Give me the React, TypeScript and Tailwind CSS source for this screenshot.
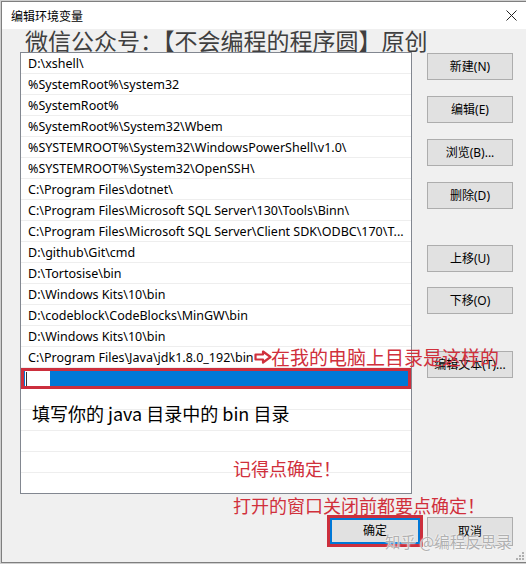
import React from "react";

const ui = { fontFamily: '"Noto Sans", "Noto Sans CJK SC", sans-serif' };
const cjk = { fontFamily: '"Noto Sans CJK SC", "Noto Sans", sans-serif' };

const rows = [
  "D:\\xshell\\",
  "%SystemRoot%\\system32",
  "%SystemRoot%",
  "%SystemRoot%\\System32\\Wbem",
  "%SYSTEMROOT%\\System32\\WindowsPowerShell\\v1.0\\",
  "%SYSTEMROOT%\\System32\\OpenSSH\\",
  "C:\\Program Files\\dotnet\\",
  "C:\\Program Files\\Microsoft SQL Server\\130\\Tools\\Binn\\",
  "C:\\Program Files\\Microsoft SQL Server\\Client SDK\\ODBC\\170\\T...",
  "D:\\github\\Git\\cmd",
  "D:\\Tortosise\\bin",
  "D:\\Windows Kits\\10\\bin",
  "D:\\codeblock\\CodeBlocks\\MinGW\\bin",
  "D:\\Windows Kits\\10\\bin",
  "C:\\Program Files\\Java\\jdk1.8.0_192\\bin",
];

function Btn({ label, className = "" }: { label: string; className?: string }) {
  return (
    <div
      className={
        "flex h-[27px] w-[86px] items-center justify-center border border-[#adadad] bg-[#e1e1e1] text-[12px] text-black " +
        className
      }
      style={ui}
    >
      {label}
    </div>
  );
}

export default function App() {
  return (
    <div className="relative h-[564px] w-[526px] overflow-hidden bg-[#cfcfcf] pl-[1px] pt-[1px]">
      <div className="relative flex h-[562px] flex-col border-b border-l border-t border-[#7f7f7f] bg-[#f0f0f0]">
        {/* title bar */}
        <div className="flex h-[27px] items-center justify-between bg-white pl-[9px] pr-[8px]">
          <span className="text-[12px] text-black" style={cjk}>
            编辑环境变量
          </span>
          <svg width="11" height="11" viewBox="0 0 11 11" className="mr-[1px]">
            <path d="M0.5 0.5 L10.5 10.5 M10.5 0.5 L0.5 10.5" stroke="#222" strokeWidth="1" />
          </svg>
        </div>

        {/* watermark heading */}
        <div
          className="h-[23px] whitespace-nowrap pl-[23px] text-[23px] leading-[23px] text-[#3f3f3f]"
          style={cjk}
        >
          微信公众号：【不会编程的程序圆】原创
        </div>

        {/* main */}
        <div className="flex items-start pl-[18px]">
          <div className="h-[442px] w-[392px] overflow-hidden border border-[#828790] bg-white">
            {rows.map((r, i) => (
              <div
                key={i}
                className="flex h-[21px] items-center whitespace-nowrap border-b border-[#eeeeee] pl-[7px] pt-[3px] text-[12.5px] text-black"
                style={ui}
              >
                {r}
              </div>
            ))}
            <div className="relative flex h-[21px] items-center bg-[#0078d7] pl-[4px]">
              <div className="flex h-[16px] w-[25px] items-center bg-white pl-[1px]">
                <div className="h-[14px] w-[1px] bg-[#333]" />
              </div>
              <div className="absolute inset-x-0 inset-y-0 border-[3px] border-[#cc2f3d]" />
            </div>
            {[0, 1, 2, 3, 4].map((i) => (
              <div key={i} className="h-[21px] border-b border-[#eeeeee]" />
            ))}
          </div>

          <div className="ml-[15px] mt-[1px] flex flex-col">
            <Btn label="新建(N)" />
            <Btn label="编辑(E)" className="mt-[16px]" />
            <Btn label="浏览(B)..." className="mt-[16px]" />
            <Btn label="删除(D)" className="mt-[16px]" />
            <Btn label="上移(U)" className="mt-[36px]" />
            <Btn label="下移(O)" className="mt-[15px]" />
            <Btn label="编辑文本(T)..." className="mt-[37px]" />
          </div>
        </div>

        {/* bottom buttons */}
        <div className="mt-[21px] flex items-start justify-end pr-[13px]">
          <div className="h-[32px] w-[96px] border-[3px] border-[#cc2f3d]">
            <div
              className="flex h-full w-full items-center justify-center border-2 border-[#0078d7] bg-[#e1e1e1] text-[12px] text-black"
              style={ui}
            >
              确定
            </div>
          </div>
          <Btn label="取消" className="ml-[4px] mt-[2px] h-[29px]" />
        </div>

        {/* resize grip */}
        <svg width="8" height="8" viewBox="0 0 8 8" className="absolute bottom-[2px] right-[2px]">
          <rect x="6" y="0" width="2" height="2" fill="#b0b0b0" />
          <rect x="3" y="3" width="2" height="2" fill="#b0b0b0" />
          <rect x="6" y="3" width="2" height="2" fill="#b0b0b0" />
          <rect x="0" y="6" width="2" height="2" fill="#b0b0b0" />
          <rect x="3" y="6" width="2" height="2" fill="#b0b0b0" />
          <rect x="6" y="6" width="2" height="2" fill="#b0b0b0" />
        </svg>
      </div>

      {/* annotations */}
      <svg width="18" height="14" viewBox="0 0 18 14" className="absolute left-[254px] top-[350px]">
        <path
          d="M1.5 4.5 H9 V1.5 L16.5 7 L9 12.5 V9.5 H1.5 Z"
          fill="white"
          stroke="#d0303c"
          strokeWidth="2.2"
          strokeLinejoin="round"
        />
      </svg>
      <div
        className="absolute left-[271px] top-[345px] whitespace-nowrap text-[19px] leading-[24px] text-[#d0303c]"
        style={cjk}
      >
        在我的电脑上目录是这样的
      </div>
      <div
        className="absolute left-[32px] top-[401px] whitespace-nowrap text-[18px] leading-[24px] text-black"
        style={cjk}
      >
        填写你的 java 目录中的 bin 目录
      </div>
      <div
        className="absolute left-[233px] top-[456px] whitespace-nowrap text-[18px] leading-[24px] text-[#d0303c]"
        style={cjk}
      >
        记得点确定！
      </div>
      <div
        className="absolute left-[233px] top-[493px] whitespace-nowrap text-[18px] leading-[24px] text-[#d0303c]"
        style={cjk}
      >
        打开的窗口关闭前都要点确定！
      </div>
      <div
        className="absolute left-[385px] top-[530px] whitespace-nowrap text-[15.5px] leading-[22px] text-[#b0b0b0] [text-shadow:0_0_1px_#ffffff,0_0_2px_#ffffff]"
        style={cjk}
      >
        知乎 @编程反思录
      </div>
    </div>
  );
}
